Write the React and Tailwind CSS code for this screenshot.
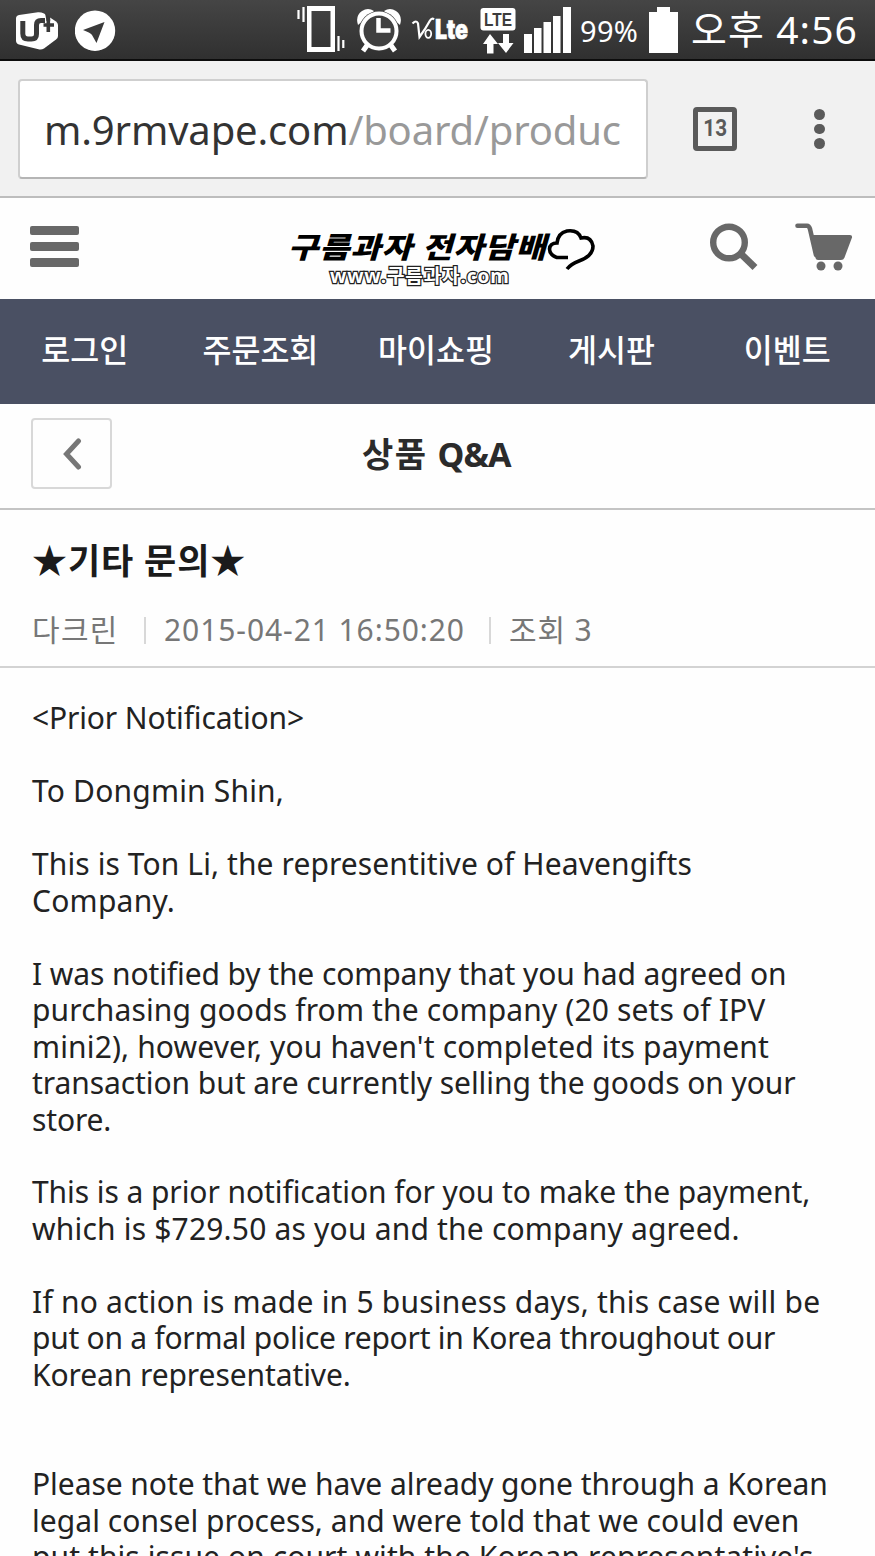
const menu = ["로그인", "주문조회", "마이쇼핑", "게시판", "이벤트"]

// empty string = blank line
const lines = [
  ["<Prior Notification>", "tracking-[-0.15px]"],
  ["", ""],
  ["To Dongmin Shin,", "tracking-[0.19px]"],
  ["", ""],
  ["This is Ton Li, the representitive of Heavengifts", "tracking-[0.1px]"],
  ["Company.", "tracking-[0.25px]"],
  ["", ""],
  ["I was notified by the company that you had agreed on", "tracking-[-0.1px]"],
  ["purchasing goods from the company (20 sets of IPV", "tracking-[0.14px]"],
  ["mini2), however, you haven't completed its payment", "tracking-[0.14px]"],
  ["transaction but are currently selling the goods on your", "tracking-[-0.07px]"],
  ["store.", "tracking-[-0.15px]"],
  ["", ""],
  ["This is a prior notification for you to make the payment,", "tracking-[-0.07px]"],
  ["which is $729.50 as you and the company agreed.", "tracking-[0.19px]"],
  ["", ""],
  ["If no action is made in 5 business days, this case will be", "tracking-[0.22px]"],
  ["put on a formal police report in Korea throughout our", "tracking-[-0.26px]"],
  ["Korean representative.", "tracking-[-0.09px]"],
  ["", ""],
  ["", ""],
  ["Please note that we have already gone through a Korean", "tracking-[-0.06px]"],
  ["legal consel process, and were told that we could even", "tracking-[0.05px]"],
  ["put this issue on court with the Korean representative's", "tracking-[0.09px]"],
]

const StatusBar = () => (
  <div className="flex h-[61px] shrink-0 items-start border-b-2 border-[#0c0c0c] bg-linear-to-b from-[#454545] to-[#303030] text-white">
    <svg className="ml-[15px] mt-[11px]" width="44" height="40" viewBox="15 11 44 40">
      <path d="M19 15 38 12.2Q41 12 44 13.5L56 21.5Q58 23 58 25V36Q58 38 56 39.5L44 48.5Q41.5 50 38.5 49.3L19 44.5Q16 43.5 16 40.5V18.5Q16 15.7 19 15Z" fill="#fff" />
      <path d="M22.800 21V33.500Q22.800 39 28 39H31.500Q36.500 39 36.500 34V25Q36.500 20.500 41 20.500H45" fill="none" stroke="#3a3a3a" strokeWidth="5" />
      <path d="M48.300 19V32M43.500 25H54" fill="none" stroke="#3a3a3a" strokeWidth="3.600" />
      <path d="M45 13 50.200 17V21H46.500Z" fill="#3a3a3a" />
    </svg>
    <svg className="ml-4 mt-[10px]" width="41" height="41" viewBox="75 10 41 41">
      <circle cx="95" cy="30.7" r="20.2" fill="#fff" />
      <path d="M104.5 22 83 30 Q91 33 92 35L96.5 43Z" fill="#3a3a3a" />
    </svg>
    <svg className="ml-[181px] mt-[6px]" width="48" height="47" viewBox="297 6 48 47">
      <path d="M307 6h28v46h-28zM311.500 11v36h19V11z" fill="#fff" fillRule="evenodd" />
      <path d="M298.500 10v9M303.500 7v15M338.500 36v15M343.300 40v8" stroke="#fff" strokeWidth="2.2" />
    </svg>
    <svg className="ml-3 mt-[8px]" width="45" height="45" viewBox="357 8 45 45" fill="none" stroke="#fff">
      <path d="M358 25Q355 16 362 11Q368 7 374 11ZM400 25Q403 16 396 11Q390 7 384 11Z" fill="#fff" stroke="none" />
      <circle cx="379" cy="31" r="20" fill="#404040" stroke="none" />
      <circle cx="379" cy="31" r="17.500" strokeWidth="4" />
      <path d="M378.500 18v12.500h12" strokeWidth="4.500" />
      <path d="m368 44-5 7M390 44l5 7" strokeWidth="5" />
    </svg>
    <svg className="ml-[9px] mt-[6px]" width="60" height="44" viewBox="411 6 60 44">
      <path d="M412.500 23.500q4-4 5.500 0l1.500 13.500Q426 28 430 20.500 432 17.500 434 19.500" fill="none" stroke="#fff" strokeWidth="2.200" />
      <ellipse cx="428.300" cy="33.800" rx="2.900" ry="4" fill="none" stroke="#fff" strokeWidth="1.800" />
      <text x="435" y="38.500" textLength="33" lengthAdjust="spacingAndGlyphs" fill="#fff" stroke="#fff" strokeWidth=".6" className="font-['Inter'] text-[27px] font-black">Lte</text>
    </svg>
    <svg className="ml-[9px] mt-[8px]" width="36" height="46" viewBox="480 8 36 46">
      <rect x="480.500" y="8" width="35" height="22.500" rx="3" fill="#fff" />
      <text x="484" y="25.500" textLength="28" lengthAdjust="spacingAndGlyphs" fill="#3c3c3c" className="font-['Liberation_Sans'] text-[18px] font-bold">LTE</text>
      <path d="M490 34 498 44H493.500V53.500H487V44H483ZM503 34H509V43H513.500L506 53 498 43H503Z" fill="#fff" />
    </svg>
    <svg className="ml-2 mt-[7px]" width="47" height="46" viewBox="524 7 47 46" fill="#fff">
      <path d="M524 34h8v19h-8zM534 28h7.500v25H534zM543.500 22h7.500v31h-7.500zM553 16h7.500v37H553zM563 7h8v46h-8z" />
    </svg>
    <span className="ml-[9px] mt-[11px] inline-block w-[59px] whitespace-nowrap text-[29px] leading-10 tracking-[0.3px]">99%</span>
    <svg className="ml-[10px] mt-[7px]" width="29" height="46" viewBox="649 7 29 46" fill="#fff">
      <path d="M657 7h13v5h8v41h-29V12h8z" />
    </svg>
    <span className="ml-[13px] mt-[7px] whitespace-nowrap text-[39px] leading-[44px] tracking-[1.1px]">오후 4:56</span>
  </div>
)

const BrowserBar = () => (
  <div className="flex h-[137px] shrink-0 items-start border-b-2 border-[#bdbdbd] bg-[#f1f1f1]">
    <div className="ml-[18px] mt-[18px] h-[100px] w-[630px] rounded border-2 border-[#cfcfcf] border-b-[#b5b5b5] bg-white pl-[24px] pr-[25px]">
      <p className="overflow-hidden whitespace-nowrap text-[40px] leading-[98px] tracking-[-0.15px] text-[#333]">
        m.9rmvape.com<span className="text-[#999]">/board/product</span>
      </p>
    </div>
    <div className="ml-[45px] mt-[46px] flex size-11 items-center justify-center rounded border-[5px] border-[#5a5a5a] font-['Roboto'] text-[23px] font-bold text-[#5a5a5a]">
      <span className="scale-x-90">13</span>
    </div>
    <div className="ml-[77px] mt-[48px] flex flex-col gap-1">
      <i className="size-[10.500px] rounded-full bg-[#5a5a5a]" />
      <i className="size-[10.500px] rounded-full bg-[#5a5a5a]" />
      <i className="size-[10.500px] rounded-full bg-[#5a5a5a]" />
    </div>
  </div>
)

const Logo = () => (
  <div className="ml-[209px] mt-[29px] w-[307px]">
    <div className="flex">
      <span className="w-[259px] origin-center scale-y-[0.88] whitespace-nowrap text-[33px] font-black italic leading-[40px] tracking-[0.8px] text-black">
        구름과자 전자담배
      </span>
      <svg className="mt-[1px] shrink-0" width="48" height="44" viewBox="547 228 48 44">
        <path d="M568 257.500H557Q549.500 255 549.500 249Q550 243 557 243Q558 233 567 231Q578 229.500 581 238Q591 236 593 246Q593 256 579 261Q571 264 567 269" fill="none" stroke="#000" strokeWidth="3.600" />
      </svg>
    </div>
    <p className="-mt-[8px] ml-[42px] whitespace-nowrap text-[19px] font-bold leading-6 tracking-[0.9px] text-white [-webkit-text-stroke:2.5px_#222] [paint-order:stroke_fill]">
      www.구름과자.com
    </p>
  </div>
)

const ShopHeader = () => (
  <header className="flex h-[101px] shrink-0 items-start">
    <div className="ml-[30px] mt-[28px] flex w-[49px] flex-col gap-[7px]">
      <i className="h-[9px] rounded-xs bg-[#686868]" />
      <i className="h-[9px] rounded-xs bg-[#686868]" />
      <i className="h-[9px] rounded-xs bg-[#686868]" />
    </div>
    <Logo />
    <svg className="ml-[114px] mt-[25px]" width="49" height="48" viewBox="709 223 49 48" fill="none" stroke="#686868">
      <circle cx="729" cy="242.500" r="15.800" strokeWidth="6.400" />
      <path d="m740 253 15 14.500" strokeWidth="7" />
    </svg>
    <svg className="ml-[37px] mt-[25px]" width="58" height="48" viewBox="795 223 58 48" fill="#686868">
      <path d="M797.500 225.800H807Q809 225.800 810 229L816 255" fill="none" stroke="#686868" strokeWidth="4.600" strokeLinecap="round" />
      <path d="M811 235H850Q852.500 235 852 237.500L844.500 257.500Q843.500 260 841 260H818Q816 260 815.500 258Z" />
      <circle cx="821" cy="266" r="4.500" />
      <circle cx="838" cy="266" r="4.500" />
    </svg>
  </header>
)

export default function App() {
  return (
    <div className="flex h-[1556px] w-[875px] flex-col overflow-hidden bg-[#fefefe] font-['Noto_Sans','Noto_Sans_CJK_KR',sans-serif]">
      <StatusBar />
      <BrowserBar />
      <ShopHeader />
      <nav className="h-[105px] shrink-0 bg-[#4a5063]">
        <ul className="-ml-[3px] grid grid-cols-5 text-center text-[31.500px] font-medium leading-[102px] text-white">
          {menu.map((item) => (
            <li key={item}>{item}</li>
          ))}
        </ul>
      </nav>

      <div className="flex h-[106px] shrink-0 items-start border-b-2 border-[#c4c4c4]">
        <button className="ml-[31px] mt-[14px] flex h-[71px] w-[81px] items-center justify-center rounded border-2 border-[#d8d8d8]">
          <svg width="20" height="34" viewBox="0 0 20 34" fill="none" stroke="#777" strokeWidth="5" strokeLinecap="round">
            <path d="M16.500 4 4.500 17 16.500 30" />
          </svg>
        </button>
        <h1 className="ml-[250px] mt-[26px] whitespace-nowrap text-[34px] font-bold leading-[48px] tracking-[1.4px] text-[#2b2b2b]">
          상품 <span className="tracking-[-1px]">Q&amp;A</span>
        </h1>
      </div>

      <div className="h-[158px] shrink-0 border-b-2 border-[#d3d3d3] px-8 pt-[27px]">
        <h2 className="whitespace-nowrap text-[35px] font-bold leading-[48px] tracking-[0.9px] text-[#1b1b1b]">★기타 문의★</h2>
        <div className="mt-[22px] flex items-center whitespace-nowrap text-[30px] leading-[46px] text-[#777]">
          <span className="w-[112px] tracking-[1.3px]">다크린</span>
          <i className="h-[27px] w-[2px] bg-[#d8d8d8]" />
          <span className="ml-[18px] w-[325px] tracking-[0.92px]">2015-04-21 16:50:20</span>
          <i className="h-[27px] w-[2px] bg-[#d8d8d8]" />
          <span className="ml-[18px] tracking-[0.8px]">조회 3</span>
        </div>
      </div>

      <article className="pl-8 pt-[32.400px] text-[30px] leading-[36.480px] text-[#222]">
        {lines.map(([text, tracking], i) => (
          <p key={i} className={`h-[36.480px] whitespace-nowrap ${tracking}`}>{text}</p>
        ))}
      </article>
    </div>
  )
}
